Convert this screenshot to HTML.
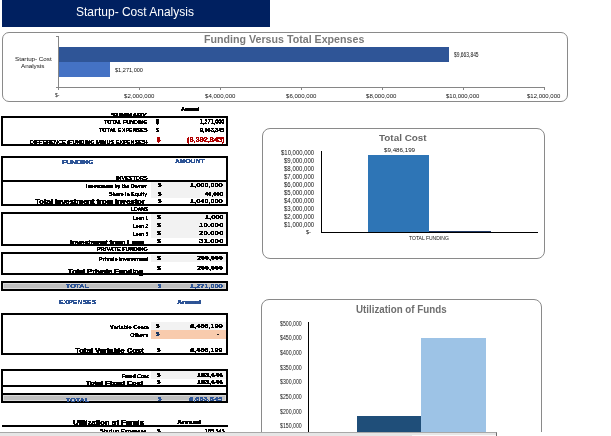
<!DOCTYPE html>
<html><head><meta charset="utf-8"><style>
html,body{margin:0;padding:0;background:#fff;width:611px;height:436px;overflow:hidden;position:relative}
.t{position:absolute;white-space:nowrap;transform-origin:0 0;font-family:"Liberation Sans",sans-serif}
.r{position:absolute}
.p{filter:url(#px)}
</style></head><body>
<svg width="0" height="0" style="position:absolute"><filter id="px" x="-5%" y="-20%" width="110%" height="140%"><feComponentTransfer><feFuncA type="discrete" tableValues="0 1 1 1"/></feComponentTransfer></filter></svg>
<div class="r" style="left:2px;top:0px;width:268px;height:27px;background:#002060"></div>
<div class="t" style="left:76.00px;top:6.41px;font-size:12.51px;line-height:12.51px;color:#fff;font-weight:400;transform:scaleX(0.9589);">Startup- Cost Analysis</div>
<div class="r" style="left:2px;top:32px;width:566px;height:69px;border:1px solid #8a8a8a;border-radius:7px;box-sizing:border-box;height:70px"></div>
<div class="t" style="left:204.00px;top:34.93px;font-size:10.47px;line-height:10.47px;color:#7a7a7a;font-weight:700;transform:scaleX(1.0183);">Funding Versus Total Expenses</div>
<div class="r" style="left:59px;top:47px;width:390px;height:15px;background:#2F5597"></div>
<div class="r" style="left:59px;top:62px;width:51px;height:15px;background:#4472C4"></div>
<div class="r" style="left:58px;top:36px;width:1px;height:54px;background:#868686"></div>
<div class="r" style="left:56px;top:36px;width:2px;height:1px;background:#868686"></div>
<div class="r" style="left:56px;top:87px;width:488px;height:1px;background:#868686"></div>
<div class="r" style="left:58px;top:87px;width:1px;height:3px;background:#868686"></div>
<div class="r" style="left:139px;top:87px;width:1px;height:3px;background:#868686"></div>
<div class="r" style="left:220px;top:87px;width:1px;height:3px;background:#868686"></div>
<div class="r" style="left:301px;top:87px;width:1px;height:3px;background:#868686"></div>
<div class="r" style="left:382px;top:87px;width:1px;height:3px;background:#868686"></div>
<div class="r" style="left:463px;top:87px;width:1px;height:3px;background:#868686"></div>
<div class="r" style="left:544px;top:87px;width:1px;height:3px;background:#868686"></div>
<div class="t" style="left:454.00px;top:51.96px;font-size:6.55px;line-height:6.55px;color:#111;font-weight:400;transform:scaleX(0.7509);">$9,663,845</div>
<div class="t" style="left:115.00px;top:66.70px;font-size:6.25px;line-height:6.25px;color:#111;font-weight:400;transform:scaleX(0.8945);">$1,271,000</div>
<div class="t" style="left:15.00px;top:56.57px;font-size:5.82px;line-height:5.82px;color:#111;font-weight:400;transform:scaleX(1.0705);">Startup- Cost</div>
<div class="t" style="left:21.40px;top:63.77px;font-size:5.82px;line-height:5.82px;color:#111;font-weight:400;transform:scaleX(1.0850);">Analysis</div>
<div class="t" style="left:54.50px;top:92.57px;font-size:5.82px;line-height:5.82px;color:#111;font-weight:400;transform:scaleX(0.8690);">$-</div>
<div class="t" style="left:123.67px;top:92.50px;font-size:6.25px;line-height:6.25px;color:#111;font-weight:400;transform:scaleX(0.9743);">$2,000,000</div>
<div class="t" style="left:204.59px;top:92.50px;font-size:6.25px;line-height:6.25px;color:#111;font-weight:400;transform:scaleX(0.9743);">$4,000,000</div>
<div class="t" style="left:285.51px;top:92.50px;font-size:6.25px;line-height:6.25px;color:#111;font-weight:400;transform:scaleX(0.9743);">$6,000,000</div>
<div class="t" style="left:366.43px;top:92.50px;font-size:6.25px;line-height:6.25px;color:#111;font-weight:400;transform:scaleX(0.9743);">$8,000,000</div>
<div class="t" style="left:445.90px;top:92.50px;font-size:6.25px;line-height:6.25px;color:#111;font-weight:400;transform:scaleX(0.9600);">$10,000,000</div>
<div class="t" style="left:526.82px;top:92.50px;font-size:6.25px;line-height:6.25px;color:#111;font-weight:400;transform:scaleX(0.9600);">$12,000,000</div>
<div class="r" style="left:262px;top:128px;width:283px;height:131px;border:1px solid #8a8a8a;border-radius:8px;box-sizing:border-box"></div>
<div class="t" style="left:379.00px;top:132.63px;font-size:9.89px;line-height:9.89px;color:#666666;font-weight:700;transform:scaleX(1.0016);">Total Cost</div>
<div class="r" style="left:321px;top:151px;width:1px;height:82px;background:#000"></div>
<div class="r" style="left:321px;top:232px;width:217px;height:1px;background:#000"></div>
<div class="r" style="left:368px;top:155px;width:61px;height:77px;background:#2E75B6"></div>
<div class="r" style="left:429px;top:230.5px;width:62px;height:1.5px;background:#1F3864"></div>
<div class="t" style="left:383.80px;top:147.67px;font-size:5.82px;line-height:5.82px;color:#111;font-weight:400;transform:scaleX(1.0680);">$9,486,199</div>
<div class="t" style="left:409.40px;top:235.72px;font-size:5.53px;line-height:5.53px;color:#111;font-weight:400;transform:scaleX(0.9106);">TOTAL FUNDING</div>
<div class="t" style="left:281.00px;top:149.68px;font-size:6.40px;line-height:6.40px;color:#111;font-weight:400;transform:scaleX(0.9326);">$10,000,000</div>
<div class="t" style="left:284.00px;top:157.68px;font-size:6.40px;line-height:6.40px;color:#111;font-weight:400;transform:scaleX(0.9428);">$9,000,000</div>
<div class="t" style="left:284.00px;top:165.68px;font-size:6.40px;line-height:6.40px;color:#111;font-weight:400;transform:scaleX(0.9428);">$8,000,000</div>
<div class="t" style="left:284.00px;top:173.68px;font-size:6.40px;line-height:6.40px;color:#111;font-weight:400;transform:scaleX(0.9428);">$7,000,000</div>
<div class="t" style="left:284.00px;top:181.68px;font-size:6.40px;line-height:6.40px;color:#111;font-weight:400;transform:scaleX(0.9428);">$6,000,000</div>
<div class="t" style="left:284.00px;top:189.68px;font-size:6.40px;line-height:6.40px;color:#111;font-weight:400;transform:scaleX(0.9428);">$5,000,000</div>
<div class="t" style="left:284.00px;top:197.68px;font-size:6.40px;line-height:6.40px;color:#111;font-weight:400;transform:scaleX(0.9428);">$4,000,000</div>
<div class="t" style="left:284.00px;top:205.68px;font-size:6.40px;line-height:6.40px;color:#111;font-weight:400;transform:scaleX(0.9428);">$3,000,000</div>
<div class="t" style="left:284.00px;top:213.68px;font-size:6.40px;line-height:6.40px;color:#111;font-weight:400;transform:scaleX(0.9428);">$2,000,000</div>
<div class="t" style="left:284.00px;top:221.68px;font-size:6.40px;line-height:6.40px;color:#111;font-weight:400;transform:scaleX(0.9428);">$1,000,000</div>
<div class="t" style="left:306.00px;top:230.37px;font-size:5.82px;line-height:5.82px;color:#111;font-weight:400;transform:scaleX(0.9656);">$-</div>
<div class="r" style="left:261px;top:299px;width:281px;height:170px;border:1px solid #8a8a8a;border-radius:8px;box-sizing:border-box"></div>
<div class="t" style="left:355.50px;top:304.58px;font-size:10.18px;line-height:10.18px;color:#6e6e6e;font-weight:700;transform:scaleX(0.9602);">Utilization of Funds</div>
<div class="r" style="left:308px;top:322px;width:1px;height:115px;background:#000"></div>
<div class="r" style="left:357px;top:416px;width:64px;height:20px;background:#1F4E79"></div>
<div class="r" style="left:421px;top:338px;width:65px;height:98px;background:#9DC3E6"></div>
<div class="t" style="left:280.00px;top:320.68px;font-size:6.40px;line-height:6.40px;color:#111;font-weight:400;transform:scaleX(0.8168);">$500,000</div>
<div class="t" style="left:280.00px;top:335.34px;font-size:6.40px;line-height:6.40px;color:#111;font-weight:400;transform:scaleX(0.8168);">$450,000</div>
<div class="t" style="left:280.00px;top:350.00px;font-size:6.40px;line-height:6.40px;color:#111;font-weight:400;transform:scaleX(0.8168);">$400,000</div>
<div class="t" style="left:280.00px;top:364.66px;font-size:6.40px;line-height:6.40px;color:#111;font-weight:400;transform:scaleX(0.8168);">$350,000</div>
<div class="t" style="left:280.00px;top:379.32px;font-size:6.40px;line-height:6.40px;color:#111;font-weight:400;transform:scaleX(0.8168);">$300,000</div>
<div class="t" style="left:280.00px;top:393.98px;font-size:6.40px;line-height:6.40px;color:#111;font-weight:400;transform:scaleX(0.8168);">$250,000</div>
<div class="t" style="left:280.00px;top:408.64px;font-size:6.40px;line-height:6.40px;color:#111;font-weight:400;transform:scaleX(0.8168);">$200,000</div>
<div class="t" style="left:280.00px;top:423.30px;font-size:6.40px;line-height:6.40px;color:#111;font-weight:400;transform:scaleX(0.8168);">$150,000</div>
<div class="t p" style="left:181.00px;top:107.05px;font-size:5.96px;line-height:5.96px;color:#000;font-weight:700;transform:scaleX(0.9052);text-shadow:0.3px 0 0 currentColor;">Annual</div>
<div class="t p" style="left:110.60px;top:111.70px;font-size:6.25px;line-height:6.25px;color:#000;font-weight:700;transform:scaleX(1.1064);text-shadow:0.3px 0 0 currentColor;">SUMMARY</div>
<div class="r" style="left:1px;top:116px;width:227px;height:30px;border:2px solid #000;box-sizing:border-box"></div>
<div class="t p" style="left:104.30px;top:119.57px;font-size:5.82px;line-height:5.82px;color:#000;font-weight:700;transform:scaleX(0.9282);">TOTAL FUNDING</div>
<div class="t p" style="left:156.00px;top:118.53px;font-size:6.69px;line-height:6.69px;color:#000;font-weight:700;transform:scaleX(0.8079);">$</div>
<div class="t p" style="left:200.00px;top:118.53px;font-size:6.69px;line-height:6.69px;color:#000;font-weight:700;transform:scaleX(0.8195);">1,271,000</div>
<div class="t p" style="left:99.20px;top:127.57px;font-size:5.82px;line-height:5.82px;color:#000;font-weight:700;transform:scaleX(0.9393);">TOTAL EXPENSES</div>
<div class="t p" style="left:156.00px;top:126.80px;font-size:6.25px;line-height:6.25px;color:#000;font-weight:700;transform:scaleX(0.8642);">$</div>
<div class="t p" style="left:200.00px;top:126.80px;font-size:6.25px;line-height:6.25px;color:#000;font-weight:700;transform:scaleX(0.8767);">9,663,845</div>
<div class="t p" style="left:30.00px;top:139.67px;font-size:5.82px;line-height:5.82px;color:#000;font-weight:700;transform:scaleX(0.9615);">DIFFERENCE (FUNDING MINUS EXPENSES)</div>
<div class="t p" style="left:157.00px;top:136.44px;font-size:7.27px;line-height:7.27px;color:#B00000;font-weight:700;transform:scaleX(0.8671);">$</div>
<div class="t p" style="left:186.80px;top:136.44px;font-size:7.27px;line-height:7.27px;color:#B00000;font-weight:700;transform:scaleX(1.0108);">(8,392,845)</div>
<div class="r" style="left:1px;top:156px;width:227px;height:50px;border:2px solid #000;box-sizing:border-box"></div>
<div class="r" style="left:1px;top:180px;width:227px;height:2px;background:#000"></div>
<div class="t p" style="left:62.00px;top:159.54px;font-size:5.38px;line-height:5.38px;color:#2F5597;font-weight:700;transform:scaleX(1.2850);">FUNDING</div>
<div class="t p" style="left:175.00px;top:158.92px;font-size:5.53px;line-height:5.53px;color:#2F5597;font-weight:700;transform:scaleX(1.2247);">AMOUNT</div>
<div class="t p" style="left:116.20px;top:175.77px;font-size:5.24px;line-height:5.24px;color:#000;font-weight:700;transform:scaleX(1.0510);">INVESTORS</div>
<div class="r" style="left:151px;top:182px;width:75px;height:16px;background:#F2F2F2"></div>
<div class="t p" style="left:85.80px;top:184.29px;font-size:5.09px;line-height:5.09px;color:#000;font-weight:700;transform:scaleX(1.0059);">Investment by the Owner</div>
<div class="t p" style="left:158.00px;top:183.15px;font-size:5.96px;line-height:5.96px;color:#000;font-weight:700;transform:scaleX(1.0575);">$</div>
<div class="t p" style="left:190.30px;top:183.15px;font-size:5.96px;line-height:5.96px;color:#000;font-weight:700;transform:scaleX(1.2435);">1,000,000</div>
<div class="t p" style="left:108.70px;top:191.79px;font-size:5.09px;line-height:5.09px;color:#000;font-weight:700;transform:scaleX(1.0334);">Share in Equity</div>
<div class="t p" style="left:158.00px;top:190.80px;font-size:6.25px;line-height:6.25px;color:#000;font-weight:700;transform:scaleX(1.0083);">$</div>
<div class="t p" style="left:205.20px;top:190.80px;font-size:6.25px;line-height:6.25px;color:#000;font-weight:700;transform:scaleX(0.9465);">40,000</div>
<div class="t p" style="left:34.90px;top:199.01px;font-size:6.84px;line-height:6.84px;color:#000;font-weight:700;transform:scaleX(1.1016);text-shadow:0.3px 0 0 currentColor;">Total Investment from Investor</div>
<div class="t p" style="left:158.00px;top:198.43px;font-size:6.11px;line-height:6.11px;color:#000;font-weight:700;transform:scaleX(1.0323);">$</div>
<div class="t p" style="left:190.30px;top:198.43px;font-size:6.11px;line-height:6.11px;color:#000;font-weight:700;transform:scaleX(1.2139);">1,040,000</div>
<div class="t p" style="left:131.00px;top:207.84px;font-size:4.80px;line-height:4.80px;color:#000;font-weight:700;transform:scaleX(1.0119);">LOANS</div>
<div class="r" style="left:1px;top:212px;width:227px;height:34px;border:2px solid #000;box-sizing:border-box"></div>
<div class="r" style="left:151px;top:214px;width:75px;height:23.5px;background:#F2F2F2"></div>
<div class="t p" style="left:133.00px;top:215.99px;font-size:5.09px;line-height:5.09px;color:#000;font-weight:700;transform:scaleX(0.9143);">Loan 1</div>
<div class="t p" style="left:156.70px;top:215.45px;font-size:5.96px;line-height:5.96px;color:#000;font-weight:700;transform:scaleX(1.2992);">$</div>
<div class="t p" style="left:204.70px;top:215.45px;font-size:5.96px;line-height:5.96px;color:#000;font-weight:700;transform:scaleX(1.2396);">1,000</div>
<div class="t p" style="left:133.00px;top:223.79px;font-size:5.09px;line-height:5.09px;color:#000;font-weight:700;transform:scaleX(0.9143);">Loan 2</div>
<div class="t p" style="left:156.70px;top:223.25px;font-size:5.96px;line-height:5.96px;color:#000;font-weight:700;transform:scaleX(1.2992);">$</div>
<div class="t p" style="left:198.80px;top:223.25px;font-size:5.96px;line-height:5.96px;color:#000;font-weight:700;transform:scaleX(1.3382);">10,000</div>
<div class="t p" style="left:133.00px;top:231.79px;font-size:5.09px;line-height:5.09px;color:#000;font-weight:700;transform:scaleX(0.9143);">Loan 3</div>
<div class="t p" style="left:156.70px;top:231.25px;font-size:5.96px;line-height:5.96px;color:#000;font-weight:700;transform:scaleX(1.2992);">$</div>
<div class="t p" style="left:198.80px;top:231.25px;font-size:5.96px;line-height:5.96px;color:#000;font-weight:700;transform:scaleX(1.3382);">20,000</div>
<div class="t p" style="left:70.00px;top:239.98px;font-size:6.40px;line-height:6.40px;color:#000;font-weight:700;transform:scaleX(1.1115);text-shadow:0.3px 0 0 currentColor;">Investment from Loan</div>
<div class="t p" style="left:156.70px;top:239.45px;font-size:5.96px;line-height:5.96px;color:#000;font-weight:700;transform:scaleX(1.2992);">$</div>
<div class="t p" style="left:198.80px;top:239.45px;font-size:5.96px;line-height:5.96px;color:#000;font-weight:700;transform:scaleX(1.3382);">31,000</div>
<div class="t p" style="left:97.10px;top:248.14px;font-size:4.80px;line-height:4.80px;color:#000;font-weight:700;transform:scaleX(1.1779);">PRIVATE FUNDING</div>
<div class="r" style="left:1px;top:252px;width:227px;height:23px;border:2px solid #000;box-sizing:border-box"></div>
<div class="r" style="left:151px;top:255px;width:75px;height:7px;background:#F2F2F2"></div>
<div class="t p" style="left:98.60px;top:256.67px;font-size:5.24px;line-height:5.24px;color:#000;font-weight:700;transform:scaleX(1.0609);">Private Investment</div>
<div class="t p" style="left:156.70px;top:256.17px;font-size:5.82px;line-height:5.82px;color:#000;font-weight:700;transform:scaleX(1.3316);">$</div>
<div class="t p" style="left:197.30px;top:256.17px;font-size:5.82px;line-height:5.82px;color:#000;font-weight:700;transform:scaleX(1.2314);">200,000</div>
<div class="t p" style="left:68.30px;top:268.78px;font-size:6.40px;line-height:6.40px;color:#000;font-weight:700;transform:scaleX(1.1607);text-shadow:0.3px 0 0 currentColor;">Total Private Funding</div>
<div class="t p" style="left:156.70px;top:265.95px;font-size:5.96px;line-height:5.96px;color:#000;font-weight:700;transform:scaleX(1.2992);">$</div>
<div class="t p" style="left:197.30px;top:265.95px;font-size:5.96px;line-height:5.96px;color:#000;font-weight:700;transform:scaleX(1.2014);">200,000</div>
<div class="r" style="left:1px;top:281px;width:227px;height:10px;border:2px solid #000;box-sizing:border-box"></div>
<div class="r" style="left:3px;top:283px;width:223px;height:6px;background:#BFBFBF;box-shadow:inset 0 0 0 1px #d9d9d9"></div>
<div class="t p" style="left:66.40px;top:284.44px;font-size:5.38px;line-height:5.38px;color:#2F5597;font-weight:700;transform:scaleX(1.3018);">TOTAL</div>
<div class="t p" style="left:158.20px;top:284.44px;font-size:5.38px;line-height:5.38px;color:#2F5597;font-weight:700;transform:scaleX(1.1048);">$</div>
<div class="t p" style="left:189.90px;top:284.44px;font-size:5.38px;line-height:5.38px;color:#2F5597;font-weight:700;transform:scaleX(1.3737);">1,271,000</div>
<div class="t p" style="left:59.30px;top:299.23px;font-size:6.11px;line-height:6.11px;color:#2F5597;font-weight:700;transform:scaleX(1.1328);">EXPENSES</div>
<div class="t p" style="left:176.80px;top:299.67px;font-size:5.82px;line-height:5.82px;color:#2F5597;font-weight:700;transform:scaleX(1.2270);text-shadow:0.3px 0 0 currentColor;">Annual</div>
<div class="r" style="left:1px;top:313px;width:227px;height:42px;border:2px solid #000;box-sizing:border-box"></div>
<div class="r" style="left:151px;top:322px;width:75px;height:8px;background:#F2F2F2"></div>
<div class="r" style="left:151px;top:330px;width:75px;height:8.7px;background:#F8CBAD"></div>
<div class="t p" style="left:109.50px;top:325.09px;font-size:5.09px;line-height:5.09px;color:#000;font-weight:700;transform:scaleX(1.1115);">Variable Costs</div>
<div class="t p" style="left:156.00px;top:324.47px;font-size:5.82px;line-height:5.82px;color:#000;font-weight:700;transform:scaleX(1.0839);">$</div>
<div class="t p" style="left:190.00px;top:324.47px;font-size:5.82px;line-height:5.82px;color:#000;font-weight:700;transform:scaleX(1.2669);">9,486,199</div>
<div class="t p" style="left:129.60px;top:332.57px;font-size:5.24px;line-height:5.24px;color:#000;font-weight:700;transform:scaleX(1.0904);">Others</div>
<div class="t p" style="left:156.00px;top:332.17px;font-size:5.82px;line-height:5.82px;color:#1F3864;font-weight:700;transform:scaleX(1.0839);">$</div>
<div class="r" style="left:217px;top:334px;width:2px;height:1px;background:#222"></div>
<div class="t p" style="left:75.30px;top:347.91px;font-size:6.84px;line-height:6.84px;color:#000;font-weight:700;transform:scaleX(1.1256);text-shadow:0.3px 0 0 currentColor;">Total Variable Cost</div>
<div class="t p" style="left:156.50px;top:347.43px;font-size:6.11px;line-height:6.11px;color:#000;font-weight:700;transform:scaleX(1.0323);">$</div>
<div class="t p" style="left:190.20px;top:347.43px;font-size:6.11px;line-height:6.11px;color:#000;font-weight:700;transform:scaleX(1.1992);">9,486,199</div>
<div class="r" style="left:1px;top:369px;width:227px;height:34px;border:2px solid #000;box-sizing:border-box"></div>
<div class="r" style="left:1px;top:385px;width:227px;height:2px;background:#000"></div>
<div class="r" style="left:1px;top:393px;width:227px;height:2px;background:#000"></div>
<div class="r" style="left:151px;top:371px;width:75px;height:8px;background:#F2F2F2"></div>
<div class="r" style="left:3px;top:395px;width:223px;height:6px;background:#BFBFBF;box-shadow:inset 0 0 0 1px #d9d9d9"></div>
<div class="t p" style="left:121.80px;top:372.93px;font-size:6.11px;line-height:6.11px;color:#000;font-weight:700;transform:scaleX(0.8549);">Fixed Cost</div>
<div class="t p" style="left:157.00px;top:372.67px;font-size:5.82px;line-height:5.82px;color:#000;font-weight:700;transform:scaleX(1.0839);">$</div>
<div class="t p" style="left:196.90px;top:372.67px;font-size:5.82px;line-height:5.82px;color:#000;font-weight:700;transform:scaleX(1.2314);">183,646</div>
<div class="t p" style="left:86.40px;top:380.55px;font-size:5.96px;line-height:5.96px;color:#000;font-weight:700;transform:scaleX(1.2427);text-shadow:0.3px 0 0 currentColor;">Total Fixed Cost</div>
<div class="t p" style="left:157.00px;top:380.27px;font-size:5.82px;line-height:5.82px;color:#000;font-weight:700;transform:scaleX(1.0839);">$</div>
<div class="t p" style="left:196.90px;top:380.27px;font-size:5.82px;line-height:5.82px;color:#000;font-weight:700;transform:scaleX(1.2314);">183,646</div>
<div class="t p" style="left:66.10px;top:396.63px;font-size:6.11px;line-height:6.11px;color:#2F5597;font-weight:700;transform:scaleX(1.1671);">TOTAL</div>
<div class="t p" style="left:158.00px;top:396.67px;font-size:5.82px;line-height:5.82px;color:#2F5597;font-weight:700;transform:scaleX(1.0839);">$</div>
<div class="t p" style="left:189.40px;top:396.67px;font-size:5.82px;line-height:5.82px;color:#2F5597;font-weight:700;transform:scaleX(1.2900);">9,663,845</div>
<div class="t p" style="left:73.30px;top:419.53px;font-size:6.69px;line-height:6.69px;color:#000;font-weight:700;transform:scaleX(1.1389);text-shadow:0.3px 0 0 currentColor;">Utilization of Funds</div>
<div class="t p" style="left:177.30px;top:419.57px;font-size:5.24px;line-height:5.24px;color:#000;font-weight:700;transform:scaleX(1.3238);text-shadow:0.3px 0 0 currentColor;">Annual</div>
<div class="r" style="left:2px;top:425px;width:226px;height:2px;background:#000"></div>
<div class="t p" style="left:100.30px;top:428.67px;font-size:5.82px;line-height:5.82px;color:#000;font-weight:700;transform:scaleX(0.9563);">Startup Expenses</div>
<div class="t p" style="left:156.50px;top:428.43px;font-size:6.11px;line-height:6.11px;color:#000;font-weight:700;transform:scaleX(1.0323);">$</div>
<div class="t p" style="left:204.60px;top:428.43px;font-size:6.11px;line-height:6.11px;color:#000;font-weight:700;transform:scaleX(0.8784);">185,545</div>
<div class="r" style="left:0px;top:432px;width:497px;height:4px;background:#e6e6e6;border-top:1px solid #a8a8a8;border-right:1px solid #6e6e6e;box-sizing:border-box;height:5px"></div>
<div class="r" style="left:412px;top:435px;width:84px;height:1px;background:#fafafa"></div>
<div class="r" style="left:497px;top:432px;width:114px;height:4px;background:#fff"></div>
</body></html>
